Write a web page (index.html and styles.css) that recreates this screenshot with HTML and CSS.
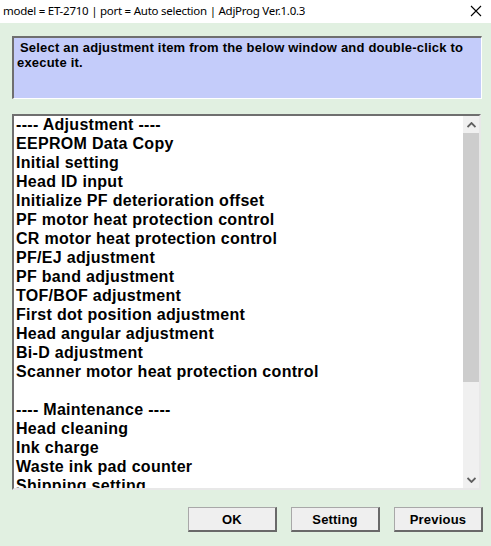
FILE: index.html
```html
<!DOCTYPE html>
<html>
<head>
<meta charset="utf-8">
<link rel="stylesheet" href="styles.css">
</head>
<body>
<div class="window">
  <div class="titlebar">
    <span class="title">model = ET-2710 | port = Auto selection | AdjProg Ver.1.0.3</span>
    <svg class="close" width="12" height="12" viewBox="0 0 12 12"><path d="M1 1 L11 11 M11 1 L1 11" stroke="#000" stroke-width="1.1" fill="none"/></svg>
  </div>
  <div class="content">
    <div class="info">Select an adjustment item from the below window and double-click to execute it.</div>
    <div class="listbox">
      <ul class="items">
        <li>---- Adjustment ----</li>
        <li>EEPROM Data Copy</li>
        <li>Initial setting</li>
        <li>Head ID input</li>
        <li>Initialize PF deterioration offset</li>
        <li>PF motor heat protection control</li>
        <li>CR motor heat protection control</li>
        <li>PF/EJ adjustment</li>
        <li>PF band adjustment</li>
        <li>TOF/BOF adjustment</li>
        <li>First dot position adjustment</li>
        <li>Head angular adjustment</li>
        <li>Bi-D adjustment</li>
        <li>Scanner motor heat protection control</li>
        <li>&nbsp;</li>
        <li>---- Maintenance ----</li>
        <li>Head cleaning</li>
        <li>Ink charge</li>
        <li>Waste ink pad counter</li>
        <li>Shipping setting</li>
      </ul>
      <div class="scrollbar">
        <div class="arrow"><svg width="9" height="6" viewBox="0 0 9 6"><path d="M0.5 5 L4.5 1 L8.5 5" stroke="#606060" stroke-width="1.8" fill="none"/></svg></div>
        <div class="track"><div class="thumb"></div></div>
        <div class="arrow"><svg width="9" height="6" viewBox="0 0 9 6"><path d="M0.5 1 L4.5 5 L8.5 1" stroke="#606060" stroke-width="1.8" fill="none"/></svg></div>
      </div>
    </div>
    <div class="buttons">
      <button class="btn">OK</button>
      <button class="btn">Setting</button>
      <button class="btn">Previous</button>
    </div>
  </div>
</div>
</body>
</html>
```
FILE: styles.css
```css
html, body {
  margin: 0;
  padding: 0;
}
body {
  width: 491px;
  height: 546px;
  background: #e1f0e1;
  overflow: hidden;
}
.window {
  display: flex;
  flex-direction: column;
  height: 546px;
}
.titlebar {
  height: 23px;
  background: #ffffff;
  display: flex;
  align-items: center;
  justify-content: space-between;
  padding: 0 9px 0 3px;
}
.title {
  font-family: "Noto Sans", "Liberation Sans", sans-serif;
  font-size: 11.5px;
  letter-spacing: -0.25px;
  color: #000;
  line-height: 16px;
  margin-top: -1px;
}
.close {
  display: block;
  margin-top: -1px;
}
.content {
  display: flex;
  flex-direction: column;
  padding: 13px 8px 0 12px;
}
.info {
  box-sizing: border-box;
  width: 470px;
  height: 63px;
  background: #c4ccfa;
  border-top: 2px solid #6f6f6f;
  border-left: 2px solid #6f6f6f;
  border-right: 1px solid #ffffff;
  border-bottom: 1px solid #ffffff;
  font-family: "Liberation Sans", Arial, sans-serif;
  font-weight: bold;
  font-size: 13px;
  letter-spacing: 0.2px;
  line-height: 15px;
  padding: 2px 4px 0 3px;
  text-indent: 3px;
  color: #000;
}
.listbox {
  box-sizing: border-box;
  margin-top: 15px;
  width: 469px;
  height: 376px;
  background: #ffffff;
  border-top: 2px solid #6f6f6f;
  border-left: 2px solid #6f6f6f;
  border-right: 2px solid #e8e8e8;
  border-bottom: 2px solid #e8e8e8;
  display: flex;
  overflow: hidden;
}
.items {
  flex: 1;
  list-style: none;
  margin: -1px 0 0 0;
  padding: 0 0 0 2px;
  font-family: "Liberation Sans", Arial, sans-serif;
  font-weight: bold;
  font-size: 16px;
  letter-spacing: 0.3px;
  line-height: 19px;
  color: #000;
  white-space: nowrap;
  overflow: hidden;
}
.scrollbar {
  width: 16px;
  background: #f0f0f0;
  display: flex;
  flex-direction: column;
}
.arrow {
  height: 17px;
  display: flex;
  align-items: center;
  justify-content: center;
}
.arrow svg {
  display: block;
}
.track {
  flex: 1;
  display: flex;
  flex-direction: column;
}
.thumb {
  height: 249px;
  background: #cdcdcd;
}
.buttons {
  display: flex;
  justify-content: flex-end;
  gap: 14px;
  margin-top: 17px;
}
.btn {
  box-sizing: border-box;
  width: 89px;
  height: 25px;
  margin: 0;
  padding: 0;
  background: #efefef;
  border-top: 1px solid #a8a8a8;
  border-left: 1px solid #a8a8a8;
  border-right: 2px solid #696969;
  border-bottom: 2px solid #696969;
  font-family: "Liberation Sans", Arial, sans-serif;
  font-weight: bold;
  font-size: 13px;
  letter-spacing: 0.2px;
  color: #000;
}
```
